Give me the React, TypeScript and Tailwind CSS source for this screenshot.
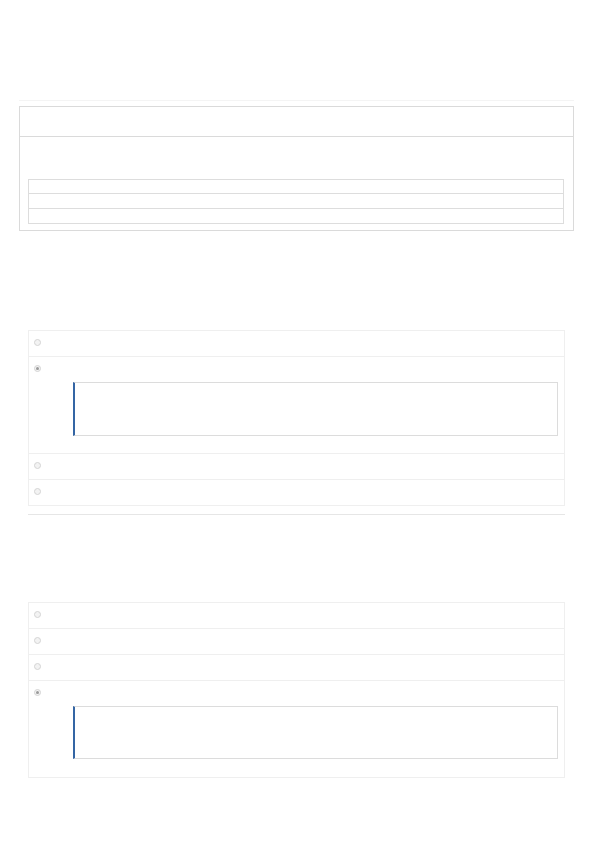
const Radio = ({ checked }: { checked?: boolean }) => (
    <div className="w-[7px] h-[7px] rounded-full border border-[#d4d4d4] bg-[#f3f3f3] flex items-center justify-center">
        {checked && <div className="w-[3px] h-[3px] rounded-full bg-[#9a9a9a]" />}
    </div>
)

const Quote = ({ tall }: { tall?: boolean }) => (
    <div className={`mt-[10px] ml-[39px] mr-[6px] border border-[#dcdcdc] border-l-2 border-l-[#3465a4] ${tall ? 'h-[54px]' : 'h-[53px]'}`} />
)

const OptionList = ({ options, selected, quoteHeight }: { options: number; selected: number; quoteHeight: string }) => (
    <div className="ml-[28px] w-[537px] border border-[#efefef]">
        {Array.from({ length: options }).map((_, index) => {
            const isLast = index === options - 1
            const isSelected = index === selected
            return (
                <div
                    key={`option-${index}`}
                    className={`pl-[5px] pt-2 ${isLast ? '' : 'border-b border-[#efefef]'} ${isSelected ? quoteHeight : isLast ? 'h-[25px]' : 'h-[26px]'}`}
                >
                    <Radio checked={isSelected} />
                    {isSelected && <Quote tall={quoteHeight === 'h-[97px]'} />}
                </div>
            )
        })}
    </div>
)

const App = () => {
    return (
        <div className="w-[595px] h-[841px] bg-white pt-[100px] font-['Liberation_Sans',sans-serif]">
            <div className="ml-[19px] w-[555px] h-px bg-[#f4f4f4]" />
            <div className="ml-[19px] mt-[5px] w-[555px] border border-[#dadada]">
                <div className="h-[30px] border-b border-[#dadada]" />
                <div className="pl-2 pr-[9px] pt-[42px] pb-[6px]">
                    <div className="border border-[#dddddd]">
                        <div className="h-[14px] border-b border-[#dddddd]" />
                        <div className="h-[15px] border-b border-[#dddddd]" />
                        <div className="h-[14px]" />
                    </div>
                </div>
            </div>

            <div className="mt-[99px]">
                <OptionList options={4} selected={1} quoteHeight="h-[97px]" />
            </div>
            <div className="ml-[28px] mt-[8px] w-[537px] h-px bg-[#e6e6e6]" />

            <div className="mt-[87px]">
                <OptionList options={4} selected={3} quoteHeight="h-[96px]" />
            </div>
        </div>
    )
}
export default App
